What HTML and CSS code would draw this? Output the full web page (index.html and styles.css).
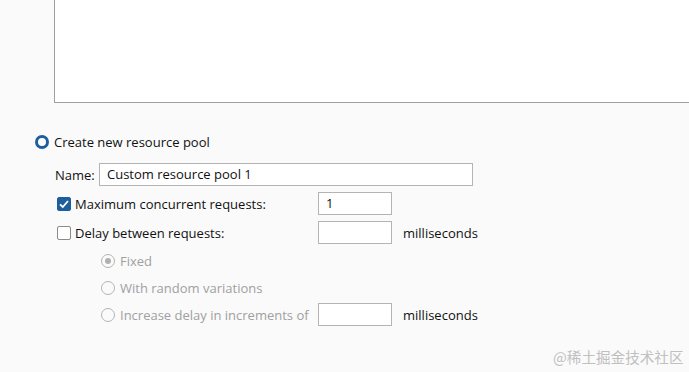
FILE: index.html
```html
<!DOCTYPE html>
<html>
<head>
<meta charset="utf-8">
<link rel="stylesheet" href="styles.css">
</head>
<body>
<div class="page">
  <div class="listbox"></div>
  <div class="form">
    <div class="row pool">
      <span class="radio on"></span>
      <span class="label">Create new resource pool</span>
    </div>
    <div class="row name">
      <span class="label">Name:</span>
      <span class="field wide">Custom resource pool 1</span>
    </div>
    <div class="row opt">
      <span class="check on"><svg viewBox="0 0 14 14" width="14" height="14"><path d="M3 7.3 L5.8 10 L11 4" fill="none" stroke="#fff" stroke-width="1.8"/></svg></span>
      <span class="label cl">Maximum concurrent requests:</span>
      <span class="field small">1</span>
    </div>
    <div class="row opt">
      <span class="check"></span>
      <span class="label cl">Delay between requests:</span>
      <span class="field small"></span>
      <span class="label unit">milliseconds</span>
    </div>
    <div class="sub">
      <div class="row subrow">
        <span class="radio dis sel"></span>
        <span class="label muted">Fixed</span>
      </div>
      <div class="row subrow">
        <span class="radio dis"></span>
        <span class="label muted">With random variations</span>
      </div>
      <div class="row subrow last">
        <span class="radio dis"></span>
        <span class="label muted inc">Increase delay in increments of</span>
        <span class="field small"></span>
        <span class="label unit">milliseconds</span>
      </div>
    </div>
  </div>
  <div class="watermark">@稀土掘金技术社区</div>
</div>
</body>
</html>
```
FILE: styles.css
```css
* { box-sizing: border-box; }
html, body { margin: 0; padding: 0; }
body {
  width: 689px;
  height: 372px;
  overflow: hidden;
  background: #fafafa;
  font-family: "Segoe UI", "Open Sans", "Noto Sans", sans-serif;
  font-size: 13px;
  color: #111;
}
.page { position: relative; width: 689px; height: 372px; overflow: hidden; }
.listbox {
  margin-left: 54px;
  width: 635px;
  height: 103px;
  background: #fff;
  border-left: 1px solid #a0a0a0;
  border-bottom: 1px solid #a0a0a0;
}
.form { padding-left: 35px; padding-top: 31px; }
.row { display: flex; align-items: center; }
.pool { height: 16px; }
.radio {
  width: 14px; height: 14px; border-radius: 50%;
  flex: none;
}
.radio.on {
  background: #fff;
  border: 3.5px solid #1e5e9c;
}
.label { line-height: 16px; white-space: nowrap; }
.pool .label { margin-left: 5px; }
.name { margin-top: 13px; padding-left: 20px; height: 23px; }
.name .label { width: 44px; }
.field {
  display: block;
  height: 23px;
  border: 1px solid #b4b4b4;
  background: #fff;
  padding: 2px 7px;
  line-height: 17px;
}
.field.wide { width: 374px; }
.field.small { width: 74px; }
.opt { padding-left: 22px; height: 23px; margin-top: 6px; }
.opt + .opt { margin-top: 6px; }
.check {
  width: 14px; height: 14px; flex: none;
  border: 1px solid #8a8a8a; border-radius: 2px; background: #fff;
  display: flex;
}
.check.on { background: #1e5e9c; border-color: #1e5e9c; }
.check.on svg { margin: -1px; }
.cl { margin-left: 4px; width: 243px; }
.unit { margin-left: 11px; }
.sub { padding-left: 66px; margin-top: 5px; }
.subrow { height: 23px; margin-top: 4px; }
.subrow:first-child { margin-top: 0; }
.radio.dis {
  border: 1px solid #b4b4b4; background: #fafafa;
  display: flex; align-items: center; justify-content: center;
}
.radio.dis.sel::after {
  content: ""; width: 6px; height: 6px; border-radius: 50%; background: #b0b0b0;
}
.muted { color: #a0a0a0; margin-left: 5px; }
.inc { width: 198px; }
.watermark {
  position: absolute;
  left: 553px; top: 347px;
  font-family: "Noto Sans CJK SC", sans-serif;
  font-size: 14.6px;
  color: #c0c0c0;
  line-height: 20px;
  white-space: nowrap;
}
```
